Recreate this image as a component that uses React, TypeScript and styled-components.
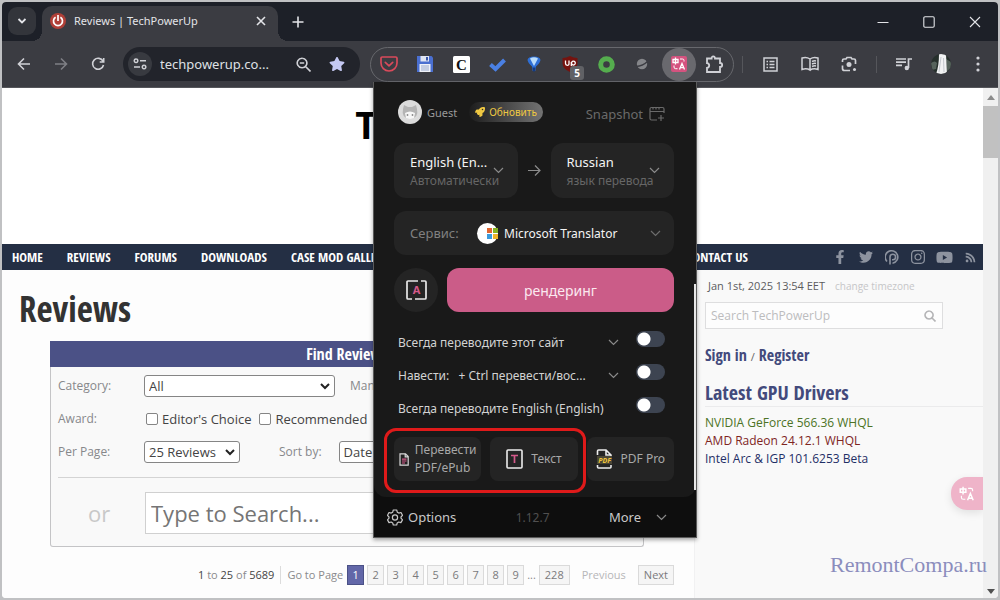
import React from "react";
import styled, { createGlobalStyle, css } from "styled-components";
import { FaFacebookF, FaTwitter, FaInstagram, FaYoutube, FaRss } from "react-icons/fa";
import { FaStar, FaRocket } from "react-icons/fa";

const ui = '"Noto Sans", "Open Sans", sans-serif';
const site = '"Open Sans", "Noto Sans", sans-serif';
const condensed = '"Open Sans Condensed", "Liberation Sans Narrow", "Open Sans", sans-serif';

const GlobalStyle = createGlobalStyle`
  *, *::before, *::after { box-sizing: border-box; }
  body { margin: 0; background: #c0c1c3; font-family: ${site}; }
  button, input, select { font: inherit; color: inherit; margin: 0; }
  button { border: 0; padding: 0; background: none; cursor: pointer; }
  a { color: inherit; text-decoration: none; }
  h1, h2, h3, ul { margin: 0; padding: 0; }
  ul { list-style: none; }
  svg { display: block; flex: none; }
`;

/* ---------- browser window ---------- */

const Desktop = styled.div`
  height: 100vh;
  padding: 2px;
`;

const Window = styled.div`
  position: relative;
  display: flex;
  flex-direction: column;
  height: 100%;
  overflow: hidden;
  border-radius: 4px;
  background: #fdfdfd;
`;

const TabBar = styled.div`
  display: flex;
  align-items: stretch;
  height: 39px;
  flex: none;
  padding-left: 6px;
  background: #1d2028;
  color: #e3e4e8;
  font-family: ${ui};
`;

const TabSearch = styled.button`
  display: grid;
  place-items: center;
  width: 28px;
  height: 28px;
  margin: 5px 6px 0 0;
  border-radius: 9px;
  background: #33353b;
`;

const Tab = styled.div`
  position: relative;
  display: flex;
  align-items: center;
  gap: 8px;
  width: 236px;
  margin-top: 4px;
  padding: 0 12px 6px 8px;
  border-radius: 10px 10px 0 0;
  background: #3b3c42;
  font-size: 11px;
  &::before, &::after {
    content: "";
    position: absolute;
    bottom: 0;
    width: 10px;
    height: 10px;
  }
  &::before {
    left: -10px;
    background: radial-gradient(circle at 0 0, transparent 10px, #3b3c42 10px);
  }
  &::after {
    right: -10px;
    background: radial-gradient(circle at 100% 0, transparent 10px, #3b3c42 10px);
  }
`;

const TabTitle = styled.span`
  flex: 1;
  white-space: nowrap;
`;

const NewTab = styled.button`
  display: grid;
  place-items: center;
  width: 40px;
`;

const WindowControls = styled.div`
  display: flex;
  margin-left: auto;
`;

const WindowControl = styled.button`
  display: grid;
  place-items: center;
  width: 46px;
`;

const Toolbar = styled.div`
  display: flex;
  align-items: center;
  height: 47px;
  flex: none;
  padding: 0 2px 0 3px;
  background: #3b3c42;
  border-bottom: 1px solid #55565b;
  color: #d0d1d6;
  font-family: ${ui};
`;

const ToolButton = styled.button<{ $wide?: boolean; $dim?: boolean }>`
  display: grid;
  place-items: center;
  width: ${(p) => (p.$wide ? 39 : 37)}px;
  height: 34px;
  opacity: ${(p) => (p.$dim ? 0.45 : 1)};
`;

const Omnibox = styled.div`
  display: flex;
  align-items: center;
  flex: 1;
  min-width: 0;
  height: 34px;
  margin: 0 10px 0 7px;
  padding: 0 14px 0 5px;
  border-radius: 17px;
  background: #22242b;
`;

const SiteInfo = styled.button`
  display: grid;
  place-items: center;
  width: 24px;
  height: 24px;
  margin-right: 8px;
  border-radius: 50%;
  background: #383a40;
`;

const Address = styled.input`
  flex: 1;
  min-width: 0;
  padding: 0;
  border: 0;
  background: none;
  color: #dfe0e4;
  font-size: 13px;
`;

const OmniButton = styled.button`
  display: grid;
  place-items: center;
  width: 33px;
  height: 24px;
  &:last-child { width: 18px; margin-left: 8px; }
`;

const Extensions = styled.div`
  display: grid;
  grid-template-columns: repeat(10, 1fr);
  width: 364px;
  height: 35px;
  border: 1px solid #67686d;
  border-radius: 18px;
`;

const Extension = styled.button<{ $active?: boolean }>`
  position: relative;
  display: grid;
  place-items: center;
  ${(p) =>
    p.$active &&
    css`
      justify-self: center;
      width: 34px;
      height: 33px;
      border-radius: 50%;
      background: #69696e;
    `}
`;

const Count = styled.span`
  position: absolute;
  right: 4px;
  bottom: 1px;
  width: 14px;
  height: 14px;
  border-radius: 3px;
  background: #606165;
  color: #fff;
  font: bold 10px/14px ${ui};
  text-align: center;
`;

const Divider = styled.span`
  width: 1px;
  height: 17px;
  margin: 0 8px;
  background: #55565b;
`;

const Profile = styled.span`
  width: 20px;
  height: 20px;
  border-radius: 50%;
  overflow: hidden;
`;

const Viewport = styled.div`
  display: flex;
  flex: 1;
  min-height: 0;
`;

const ScrollTrack = styled.div`
  display: flex;
  flex-direction: column;
  align-items: center;
  width: 15px;
  padding: 7px 0 4px;
  background: #f0f0f0;
`;

const ScrollThumb = styled.div`
  width: 15px;
  height: 52px;
  margin: 6px 0 auto;
  background: #c1c1c1;
`;

/* ---------- web page ---------- */

const Page = styled.div`
  position: relative;
  display: flex;
  flex-direction: column;
  flex: 1;
  min-width: 0;
  overflow: hidden;
  color: #333;
`;

const Masthead = styled.header`
  flex: none;
  height: 156px;
  padding: 12px 0 0 36%;
  background: #fff;
  color: #000;
  font: bold 38px/48px "Open Sans", sans-serif;
`;

const SiteNav = styled.nav`
  display: flex;
  align-items: center;
  flex: none;
  height: 26px;
  padding: 0 0 0 10px;
  background: #242f44;
  color: #fff;
  font: bold 13px/24px ${condensed};
  white-space: nowrap;
`;

const NavLinks = styled.ul`
  display: flex;
  gap: 24px;
  flex: 1;
`;

const Social = styled.ul`
  display: flex;
  margin-left: 79px;
  color: #8d939f;
  a {
    display: grid;
    place-items: center;
    width: 26px;
    height: 26px;
  }
`;

const Columns = styled.div`
  display: flex;
  flex: 1;
`;

const Main = styled.main`
  flex: 1;
  min-width: 0;
  padding: 12px 50px 0 17px;
  background: #fdfdfd;
`;

const PageTitle = styled.h1`
  color: #333;
  font: bold 35px/54px ${condensed};
`;

const Finder = styled.form`
  margin: 5px 0 0 31px;
  border: 1px solid #c4c4c6;
  border-top: 0;
  border-radius: 0 0 3px 3px;
  background: #f9f9f9;
`;

const FinderTitle = styled.h2`
  margin: 0 -1px;
  background: #4b5186;
  color: #fff;
  font: bold 16px/26px ${condensed};
  text-align: center;
`;

const FinderBody = styled.div`
  padding: 6px 7px 12px;
`;

const Row = styled.div`
  display: flex;
  align-items: center;
  height: 33px;
  padding-bottom: 8px;
  font-size: 13px;
`;

const Label = styled.label<{ $inline?: boolean }>`
  width: ${(p) => (p.$inline ? "auto" : "86px")};
  flex: none;
  color: #87888b;
  font-size: 12px;
`;

const SelectWrap = styled.span<{ $w: number }>`
  position: relative;
  width: ${(p) => p.$w}px;
  flex: none;
  svg { position: absolute; right: 5px; top: 7px; pointer-events: none; }
  select {
    appearance: none;
    display: block;
    width: 100%;
    height: 22px;
    padding: 0 4px;
    border: 1px solid #858585;
    border-radius: 3px;
    background: #fff;
    color: #444;
    font-size: 13px;
    line-height: 20px;
  }
`;

const SortGroup = styled.span`
  display: flex;
  align-items: center;
  gap: 17px;
  margin-left: 39px;
`;

const MakerGroup = styled.span`
  display: flex;
  margin-left: 15px;
`;

const Tick = styled.label`
  display: flex;
  align-items: center;
  gap: 4px;
  margin: 0 6px 0 2px;
  color: #444;
  font-size: 13px;
  input {
    appearance: none;
    width: 12px;
    height: 12px;
    border: 1px solid #858585;
    border-radius: 2px;
    background: #fff;
  }
`;

const SearchRow = styled.div`
  display: flex;
  align-items: center;
  margin-top: 5px;
  padding-top: 14px;
  border-top: 1px solid #d4d4d4;
  label {
    width: 87px;
    padding-left: 30px;
    color: #c8c8c8;
    font-size: 22px;
  }
  input {
    flex: 1;
    min-width: 0;
    height: 42px;
    padding: 0 5px;
    border: 1px solid #d0d0d0;
    background: #fff;
    font-size: 22px;
    &::placeholder { color: #757575; opacity: 1; }
  }
`;

const Pager = styled.nav`
  display: flex;
  align-items: center;
  justify-content: flex-end;
  gap: 3px;
  margin: 18px -30px 0 0;
  color: #8a8a8c;
  font-size: 11px;
  line-height: 18px;
  white-space: nowrap;
`;

const Summary = styled.span`
  margin-right: 2px;
  padding-right: 6px;
  border-right: 1px solid #dcdcdc;
  b { color: #444; font-weight: 500; }
`;

const PagerText = styled.span<{ $faint?: boolean }>`
  margin: 0 ${(p) => (p.$faint ? "9px" : "1px")};
  color: ${(p) => (p.$faint ? "#b6b6b8" : "inherit")};
`;

const PageLink = styled.a<{ $current?: boolean }>`
  min-width: 17px;
  padding: 0 5px;
  border: 1px solid ${(p) => (p.$current ? "#4b5186" : "#dadada")};
  background: ${(p) => (p.$current ? "#6267a8" : "#f5f5f5")};
  color: ${(p) => (p.$current ? "#fff" : "#7a7a7c")};
  text-align: center;
`;

const NumberLinks = styled.span`
  display: flex;
  gap: 3px;
  a { padding: 0 4px; }
`;

const Sidebar = styled.aside`
  width: 289px;
  flex: none;
  padding: 8px 0 0 10px;
  border-left: 1px solid #f1f1f2;
  background: #f9f9f9;
`;

const DateLine = styled.p`
  display: flex;
  align-items: center;
  gap: 10px;
  margin: 0 0 8px 3px;
  color: #5c5c5e;
  font-size: 11px;
  line-height: 16px;
  a { color: #c6c6c8; font-size: 10px; }
`;

const SiteSearch = styled.div`
  display: flex;
  align-items: center;
  width: 238px;
  height: 27px;
  padding: 0 6px 0 5px;
  border: 1px solid #dededf;
  background: #fdfdfd;
  input {
    flex: 1;
    min-width: 0;
    padding: 0;
    border: 0;
    background: none;
    font-size: 12px;
    &::placeholder { color: #bcbcbe; opacity: 1; }
  }
`;

const SignIn = styled.p`
  margin: 14px 0 13px;
  color: #434a7c;
  font: bold 16px/24px ${condensed};
  span { color: #666; font: 11px ${site}; }
`;

const SideTitle = styled.h2`
  border-bottom: 1px solid #ebebec;
  color: #434a7c;
  font: bold 20px/26px ${condensed};
`;

const Drivers = styled.ul`
  margin-top: 7px;
  font-size: 12px;
  font-weight: 500;
  line-height: 18px;
`;

const Driver = styled.li<{ $color: string }>`
  color: ${(p) => p.$color};
`;

const FloatButton = styled.button`
  position: absolute;
  right: 0;
  bottom: 88px;
  display: grid;
  place-items: center;
  width: 32px;
  height: 33px;
  border-radius: 16px 0 0 16px;
  background: #efb4c9;
  box-shadow: 0 3px 8px rgba(0, 0, 0, 0.1);
`;

const Watermark = styled.div`
  position: absolute;
  right: 11px;
  bottom: 19px;
  color: #8b8dbd;
  font: 22px/28px "Liberation Serif", serif;
`;

/* ---------- translator popup ---------- */

const Popup = styled.section`
  position: absolute;
  top: 80px;
  right: 301px;
  width: 324px;
  border: 1px solid #5a5a5a;
  border-top: 0;
  background: #0e0e0e;
  box-shadow: 0 2px 4px rgba(0, 0, 0, 0.35);
  color: #c9c9c9;
  font-family: ${ui};
  font-size: 13px;
`;

const PopupBody = styled.div`
  position: relative;
  padding: 18px 22px 16px 20px;
  border-radius: 0 0 12px 12px;
  background: #191919;
`;

const PopupScroll = styled.div`
  position: absolute;
  right: 0;
  top: 202px;
  width: 2px;
  height: 206px;
  background: #e6e6e6;
`;

const Account = styled.div`
  display: flex;
  align-items: center;
  height: 24px;
  padding: 0 9px 0 4px;
  font-size: 11px;
`;

const Guest = styled.span`
  margin: 0 12px 0 5px;
  color: #999;
`;

const Upgrade = styled.button`
  display: flex;
  align-items: center;
  gap: 4px;
  height: 20px;
  padding: 0 6px;
  border-radius: 10px;
  background: linear-gradient(90deg, #1d1d1d, #737373);
  color: #efc842;
  font-size: 10px;
`;

const Snapshot = styled.button`
  display: flex;
  align-items: center;
  gap: 6px;
  margin-left: auto;
  padding-top: 3px;
  color: #6a6a6a;
  font-size: 13px;
`;

const Languages = styled.div`
  display: grid;
  grid-template-columns: 1fr 33px 1fr;
  align-items: center;
  justify-items: center;
  margin-top: 19px;
  color: #8c8c8c;
`;

const Language = styled.button`
  display: flex;
  align-items: center;
  justify-content: space-between;
  width: 100%;
  height: 55px;
  padding: 0 14px 0 16px;
  border-radius: 12px;
  background: #242424;
  text-align: left;
  white-space: nowrap;
`;

const LanguageText = styled.span`
  display: block;
  width: 0;
  strong {
    display: block;
    color: #f4f4f4;
    font-size: 13px;
    font-weight: 400;
    line-height: 20px;
  }
  small {
    display: block;
    color: #666;
    font-size: 12px;
    line-height: 18px;
  }
`;

const Service = styled.button`
  display: flex;
  align-items: center;
  width: 100%;
  height: 44px;
  margin-top: 13px;
  padding: 0 13px 0 16px;
  border-radius: 12px;
  background: #242424;
  color: #f4f4f4;
  font-size: 12px;
  svg:last-child { margin-left: auto; }
`;

const ServiceLabel = styled.span`
  width: 67px;
  color: #808080;
  font-size: 13px;
  text-align: left;
`;

const ServiceLogo = styled.span`
  display: grid;
  place-items: center;
  width: 21px;
  height: 21px;
  margin-right: 6px;
  border-radius: 50%;
  background: #fff;
`;

const Actions = styled.div`
  display: flex;
  gap: 9px;
  margin-top: 13px;
`;

const RoundButton = styled.button`
  display: grid;
  place-items: center;
  width: 44px;
  height: 44px;
  border-radius: 50%;
  background: #242424;
`;

const Render = styled.button`
  flex: 1;
  border-radius: 12px;
  background: #cb5c88;
  color: #fbe9f0;
  font-size: 14px;
`;

const Options = styled.div`
  display: grid;
  row-gap: 16px;
  margin-top: 22px;
  padding: 0 9px 0 4px;
`;

const Option = styled.div`
  display: flex;
  align-items: center;
  height: 17px;
  color: #d2d2d2;
  font-size: 12px;
  white-space: nowrap;
  > label { white-space: pre; }
  > svg { margin-left: auto; }
`;

const Switch = styled.input`
  appearance: none;
  width: 29px;
  height: 16px;
  margin: 0 0 7px auto;
  border-radius: 8px;
  background: radial-gradient(circle at 8px 8px, #fff 6px, transparent 7px), #3d4451;
  svg + & { margin-left: 17px; }
`;

const Tools = styled.div`
  position: relative;
  display: grid;
  grid-template-columns: repeat(3, 1fr);
  gap: 9px;
  margin-top: 20px;
`;

const Tool = styled.button`
  display: flex;
  align-items: center;
  justify-content: center;
  gap: 8px;
  height: 44px;
  border-radius: 8px;
  background: #242424;
  color: #a8a8a8;
  font-size: 12px;
  line-height: 18px;
  text-align: left;
  &:first-child { gap: 6px; }
`;

const Highlight = styled.div`
  position: absolute;
  left: -10px;
  top: -9px;
  width: 202px;
  height: 65px;
  border: 3px solid #df1a1a;
  border-radius: 12px;
  pointer-events: none;
`;

const PopupFooter = styled.footer`
  display: flex;
  align-items: center;
  justify-content: space-between;
  height: 40px;
  padding: 0 29px 0 13px;
  button { display: flex; align-items: center; gap: 5px; }
  button:last-child { gap: 15px; }
`;

const Version = styled.span`
  color: #505050;
  font-size: 12px;
`;

/* ---------- drawings ---------- */

type Stroke = { d: string; size?: number; w?: number; color?: string; box?: number };

const Line = ({ d, size = 16, w = 1.6, color = "currentColor", box = 16 }: Stroke) => (
  <svg width={size} height={size} viewBox={`0 0 ${box} ${box}`} fill="none" stroke={color} strokeWidth={w}>
    <path d={d} />
  </svg>
);

const Chevron = ({ color = "#8a8a8a", w = 1.2 }: { color?: string; w?: number }) => (
  <svg width="11" height="7" viewBox="0 0 11 7" fill="none" stroke={color} strokeWidth={w}>
    <path d="M1 1l4.500 4.500L10 1" />
  </svg>
);

const SelectArrow = () => (
  <svg width="10" height="8" viewBox="0 0 10 8" fill="none" stroke="#222" strokeWidth="2">
    <path d="M1 2l4 4 4-4" />
  </svg>
);

const Power = () => (
  <svg width="16" height="16" viewBox="0 0 16 16">
    <circle cx="8" cy="8" r="8" fill="#b04038" />
    <path d="M5.600 4.300a4.500 4.500 0 1 0 4.800 0M8 2v6" fill="none" stroke="#fff" strokeWidth="1.700" />
  </svg>
);

const TranslateMark = ({ size, bg }: { size: number; bg?: string }) => (
  <svg width={size} height={size} viewBox="0 0 16 16">
    {bg && <rect width="16" height="16" rx="2" fill={bg} />}
    <g fill="none" stroke="#fff" strokeWidth="1.300">
      <path d="M2 3.500h5v3H2zM4.500 1.500v7M8.500 13.500l2.500-6 2.500 6M9.300 11.700h3.400" />
      <path d="M9 3h2.500q1.500 0 1.500 1.500v1M3 9.500v1.500q0 1.700 1.700 1.700H6.500" strokeWidth="1" />
    </g>
  </svg>
);

const Pocket = () => (
  <svg width="18" height="18" viewBox="0 0 18 18" fill="none" stroke="#d94a5b" strokeWidth="1.700" strokeLinecap="round" strokeLinejoin="round">
    <path d="M2.200 2h13.600q1.200 0 1.200 1.200V8a8 8 0 0 1-16 0V3.200Q1 2 2.200 2zM5.300 7.300L9 10.800l3.700-3.500" />
  </svg>
);

const Floppy = () => (
  <svg width="16" height="16" viewBox="0 0 16 16">
    <path d="M0 0h14.500L16 1.500V16H0z" fill="#4a6fd0" />
    <path d="M3.500 0h8.500v5.500H3.500z" fill="#dfe5f3" />
    <path d="M9 1h2v3.500H9z" fill="#3a57a8" />
    <path d="M2.500 8h11v8h-11z" fill="#eef1f8" />
    <path d="M4 10h8M4 12h8M4 14h8" stroke="#9aa9cc" />
  </svg>
);

const LetterC = () => (
  <svg width="17" height="17" viewBox="0 0 17 17">
    <rect width="17" height="17" rx="1.500" fill="#fff" />
    <text x="8.500" y="13.500" textAnchor="middle" fontFamily="Liberation Serif, serif" fontWeight="700" fontSize="15" fill="#111">C</text>
  </svg>
);

const Shield = () => (
  <svg width="16" height="16" viewBox="0 0 16 16">
    <path d="M8 0q3.500 2 7.500 2v5q0 6-7.500 9Q.5 13 .5 7V2Q4.500 2 8 0z" fill="#75130f" />
    <path d="M3.500 4.500v3q0 1.800 1.800 1.800T7 7.500v-3M9.300 10V6M9.500 7a1.900 1.900 0 1 1 0 .1" fill="none" stroke="#fff" strokeWidth="1.300" />
  </svg>
);

const Balloon = () => (
  <svg width="14" height="16" viewBox="0 0 14 16">
    <path d="M.5 4Q1 .5 7 .5T13.500 4Q13 7 9 10.500L8.300 15H5.700L5 10.500Q1 7 .5 4z" fill="#2e6fd6" />
    <path d="M3 2.500q4-2.500 8 0L7 10z" fill="#b9dcfb" />
    <path d="M5.500 11.500h3l-.7 4H6.200z" fill="#123a80" />
  </svg>
);

const Puzzle = () => (
  <Line
    size={19}
    box={19}
    w={1.8}
    d="M2 3.500h4.600Q6.500 1.500 8.300 1.500T10 3.500h5V8q2.200 0 2.200 2T15 12v5H2v-4.200q2.200-.2 2.200-2.300T2 8.200z"
  />
);

const Waterfall = () => (
  <svg width="20" height="20" viewBox="0 0 20 20">
    <rect width="20" height="20" fill="#26302c" />
    <path d="M0 9q4-3 6 0l-1 6-4 1zM15 5l5 3v6l-4 3z" fill="#56635c" />
    <path d="M8 0h7l1 20H5q3-8 3-20z" fill="#f2f3f4" />
    <path d="M10 3L8 18M12.500 4l.5 14" stroke="#b9bec4" strokeWidth=".8" />
  </svg>
);

const Patreon = () => (
  <svg width="15" height="15" viewBox="0 0 15 15" fill="none" stroke="currentColor" strokeWidth="1.600">
    <path d="M5 14.500V7a2.800 2.800 0 1 1 2.800 2.800H7M2 11.500A6.300 6.300 0 1 1 7.500 13.300" />
  </svg>
);

const GuestFace = () => (
  <svg width="24" height="24" viewBox="0 0 24 24">
    <circle cx="12" cy="12" r="12" fill="#dcdcdc" />
    <path d="M5 9l1-4 4 2h4l4-2 1 4q2 9-7 10Q3 18 5 9z" fill="#b4b4b4" />
    <path d="M7 13q5-3 10 0l-1 5q-4 2-8 0z" fill="#f6f6f6" />
    <circle cx="9.500" cy="15" r=".9" fill="#888" />
    <circle cx="14.500" cy="15" r=".9" fill="#888" />
  </svg>
);

const Gear = () => (
  <svg width="16" height="17" viewBox="0 0 16 17" fill="none" stroke="#c9c9c9" strokeWidth="1.200" strokeLinejoin="round">
    <path d="M6.300 1h3.400l.6 2.200 1.500.9 2.200-.6 1.500 2.800L14 8v1.200l1.500 1.600-1.600 2.800-2.200-.6-1.500.9L9.700 16H6.300l-.6-2.100-1.500-.9-2.200.6-1.500-2.800L2 9.200V8L.5 6.300 2 3.500l2.200.6 1.500-.9z" />
    <circle cx="8" cy="8.500" r="2.600" />
  </svg>
);

const sites = ["HOME", "REVIEWS", "FORUMS", "DOWNLOADS", "CASE MOD GALLERY"];
const pages = [1, 2, 3, 4, 5, 6, 7, 8, 9];

/* ---------- sections ---------- */

const Chrome = () => (
  <>
    <TabBar>
      <TabSearch aria-label="Search tabs">
        <Line size={10} box={10} w={1.8} d="M1.500 3l3.500 3.500L8.500 3" />
      </TabSearch>
      <Tab>
        <Power />
        <TabTitle>Reviews | TechPowerUp</TabTitle>
        <button aria-label="Close tab"><Line size={10} box={10} d="M1 1l8 8M9 1L1 9" /></button>
      </Tab>
      <NewTab aria-label="New tab"><Line size={12} box={12} d="M6 .5v11M.5 6h11" /></NewTab>
      <WindowControls>
        <WindowControl aria-label="Minimize"><Line size={12} box={12} w={1.1} d="M.5 6.500h11" /></WindowControl>
        <WindowControl aria-label="Maximize"><Line size={12} box={12} w={1.1} d="M2 .8h8q1.200 0 1.200 1.200v8q0 1.200-1.200 1.200H2Q.8 11.200.8 10V2Q.8.8 2 .8z" /></WindowControl>
        <WindowControl aria-label="Close"><Line size={12} box={12} w={1.1} d="M1 1l10 10M11 1L1 11" /></WindowControl>
      </WindowControls>
    </TabBar>
    <Toolbar>
      <ToolButton aria-label="Back"><Line size={14} box={14} d="M13 7H2M7 1.500L1.500 7 7 12.500" /></ToolButton>
      <ToolButton aria-label="Forward" $dim><Line size={14} box={14} d="M1 7h11M7 1.500L12.500 7 7 12.500" /></ToolButton>
      <ToolButton aria-label="Reload"><Line size={14} box={14} d="M12 4.200A5.500 5.500 0 1 0 12.500 8M12.700 1v4H8.700" /></ToolButton>
      <Omnibox>
        <SiteInfo aria-label="Site information">
          <Line size={14} box={14} w={1.5} d="M3 2a1.800 1.800 0 1 0 .1 0M7 3.800h6M11 8.200a1.800 1.800 0 1 0 .1 0M1 10h6" />
        </SiteInfo>
        <Address aria-label="Address" defaultValue="techpowerup.co..." />
        <OmniButton aria-label="Zoom"><Line size={15} box={15} d="M6 1.200a4.800 4.800 0 1 0 .1 0M9.500 9.500l5 5M3.800 6h4.400" /></OmniButton>
        <OmniButton aria-label="Bookmark"><FaStar size={16} color="#c4c8f2" /></OmniButton>
      </Omnibox>
      <Extensions>
        <Extension aria-label="Pocket"><Pocket /></Extension>
        <Extension aria-label="Save"><Floppy /></Extension>
        <Extension aria-label="Cache"><LetterC /></Extension>
        <Extension aria-label="Tasks"><Line size={17} box={17} w={4} color="#4a80e4" d="M1.500 8.500l5 4.500L15.500 4" /></Extension>
        <Extension aria-label="Balloon"><Balloon /></Extension>
        <Extension aria-label="Blocker"><Shield /><Count>5</Count></Extension>
        <Extension aria-label="Ring">
          <svg width="17" height="17"><circle cx="8.500" cy="8.500" r="5.800" fill="none" stroke="#55ad4e" strokeWidth="5" /></svg>
        </Extension>
        <Extension aria-label="Planet">
          <svg width="12" height="12"><circle cx="6" cy="6" r="5.200" fill="#85868a" /><path d="M0 8.500Q7 8 12 3" stroke="#3b3c42" strokeWidth="1.300" fill="none" /></svg>
        </Extension>
        <Extension aria-label="Immersive Translate" $active><TranslateMark size={16} bg="#d4537f" /></Extension>
        <Extension aria-label="Extensions"><Puzzle /></Extension>
      </Extensions>
      <Divider />
      <ToolButton $wide aria-label="Reading list">
        <Line size={15} box={15} w={1.5} d="M1 1h13v13H1zM3.500 4.500H5M6.500 4.500h5M3.500 7.500H5M6.500 7.500h5M3.500 10.500H5M6.500 10.500h5" />
      </ToolButton>
      <ToolButton $wide aria-label="Reading mode">
        <Line size={18} box={18} w={1.5} d="M9 4v11Q5.500 13 1 14.500V3Q5.500 1.500 9 4q3.500-2.500 8-1v11.500Q12.500 13 9 15M11 6.500q2-1 4-.6M11 9q2-1 4-.6M11 11.500q2-1 4-.6" />
      </ToolButton>
      <ToolButton $wide aria-label="Lens">
        <svg width="16" height="16" viewBox="0 0 16 16" fill="none" stroke="currentColor" strokeWidth="1.700">
          <path d="M1.500 6V4.500q0-1.500 1.500-1.500h2L6 1.500h4L11 3h2q1.500 0 1.500 1.500V8M1.500 9.500v3q0 2 2 2H9" />
          <circle cx="8" cy="8.500" r="2.500" fill="currentColor" stroke="none" />
          <circle cx="13.500" cy="13.500" r="1.500" fill="currentColor" stroke="none" />
        </svg>
      </ToolButton>
      <Divider />
      <ToolButton aria-label="Media">
        <svg width="16" height="14" viewBox="0 0 16 14" fill="none" stroke="currentColor" strokeWidth="1.700">
          <path d="M0 2h10M0 5.200h10M0 8.400h6M12.500 11V2H16" />
          <circle cx="10.800" cy="11" r="2.200" fill="currentColor" stroke="none" />
        </svg>
      </ToolButton>
      <ToolButton aria-label="Profile"><Profile><Waterfall /></Profile></ToolButton>
      <ToolButton aria-label="Menu">
        <svg width="4" height="16" fill="currentColor"><circle cx="2" cy="2" r="1.600" /><circle cx="2" cy="8" r="1.600" /><circle cx="2" cy="14" r="1.600" /></svg>
      </ToolButton>
    </Toolbar>
  </>
);

const Site = () => (
  <Page>
    <Masthead>T</Masthead>
    <SiteNav>
      <NavLinks>{sites.map((s) => <li key={s}><a href="#">{s}</a></li>)}</NavLinks>
      <a href="#">CONTACT US</a>
      <Social>
        <li><a href="#" aria-label="Facebook"><FaFacebookF size={14} /></a></li>
        <li><a href="#" aria-label="Twitter"><FaTwitter size={14} /></a></li>
        <li><a href="#" aria-label="Patreon"><Patreon /></a></li>
        <li><a href="#" aria-label="Instagram"><FaInstagram size={16} /></a></li>
        <li><a href="#" aria-label="YouTube"><FaYoutube size={17} /></a></li>
        <li><a href="#" aria-label="RSS"><FaRss size={11} /></a></li>
      </Social>
    </SiteNav>
    <Columns>
      <Main>
        <PageTitle>Reviews</PageTitle>
        <Finder>
          <FinderTitle>Find Reviews</FinderTitle>
          <FinderBody>
            <Row>
              <Label htmlFor="category">Category:</Label>
              <SelectWrap $w={191}><select id="category"><option>All</option></select><SelectArrow /></SelectWrap>
              <MakerGroup><Label as="span">Manufacturer:</Label></MakerGroup>
            </Row>
            <Row>
              <Label as="span">Award:</Label>
              <Tick><input type="checkbox" />Editor's Choice</Tick>
              <Tick><input type="checkbox" />Recommended</Tick>
            </Row>
            <Row>
              <Label htmlFor="perpage">Per Page:</Label>
              <SelectWrap $w={96}><select id="perpage"><option>25 Reviews</option></select><SelectArrow /></SelectWrap>
              <SortGroup>
                <Label htmlFor="sort" $inline>Sort by:</Label>
                <SelectWrap $w={96}><select id="sort"><option>Date</option></select><SelectArrow /></SelectWrap>
              </SortGroup>
            </Row>
            <SearchRow>
              <label htmlFor="find">or</label>
              <input id="find" placeholder="Type to Search..." />
            </SearchRow>
          </FinderBody>
        </Finder>
        <Pager>
          <Summary><b>1</b> to <b>25</b> of <b>5689</b></Summary>
          <PagerText>Go to Page</PagerText>
          <NumberLinks>{pages.map((n) => <PageLink key={n} href="#" $current={n === 1}>{n}</PageLink>)}</NumberLinks>
          <span>...</span>
          <PageLink href="#">228</PageLink>
          <PagerText $faint>Previous</PagerText>
          <PageLink href="#">Next</PageLink>
        </Pager>
      </Main>
      <Sidebar>
        <DateLine>Jan 1st, 2025 13:54 EET <a href="#">change timezone</a></DateLine>
        <SiteSearch>
          <input aria-label="Search TechPowerUp" placeholder="Search TechPowerUp" />
          <Line size={12} box={12} color="#b4b4b6" d="M5 1a4 4 0 1 0 .1 0M8 8l3.500 3.500" />
        </SiteSearch>
        <SignIn><a href="#">Sign in</a> <span>/</span> <a href="#">Register</a></SignIn>
        <SideTitle>Latest GPU Drivers</SideTitle>
        <Drivers>
          <Driver $color="#4c7325"><a href="#">NVIDIA GeForce 566.36 WHQL</a></Driver>
          <Driver $color="#7e251f"><a href="#">AMD Radeon 24.12.1 WHQL</a></Driver>
          <Driver $color="#1f2f66"><a href="#">Intel Arc &amp; IGP 101.6253 Beta</a></Driver>
        </Drivers>
      </Sidebar>
    </Columns>
    <FloatButton aria-label="Translate page"><TranslateMark size={18} /></FloatButton>
  </Page>
);

const Translator = () => (
  <Popup>
    <PopupBody>
      <Account>
        <GuestFace />
        <Guest>Guest</Guest>
        <Upgrade><FaRocket size={10} />Обновить</Upgrade>
        <Snapshot>
          Snapshot
          <Line size={16} w={1.2} d="M15 7V3q0-1.500-1.500-1.500h-11Q1 1.500 1 3v9.500Q1 14 2.500 14H8M1 5.500h14M4 1.500v2M7 1.500v2M10 1.500v2M12 9v6M9 12h6" />
        </Snapshot>
      </Account>
      <Languages>
        <Language><LanguageText><strong>English (En...</strong><small>Автоматически</small></LanguageText><Chevron /></Language>
        <Line size={13} box={13} w={1.2} d="M0 6.500h12M7 1.500l5 5-5 5" />
        <Language><LanguageText><strong>Russian</strong><small>язык перевода</small></LanguageText><Chevron /></Language>
      </Languages>
      <Service>
        <ServiceLabel>Сервис:</ServiceLabel>
        <ServiceLogo>
          <svg width="11" height="11"><path d="M0 0h5v5H0z" fill="#e0662f" /><path d="M6 0h5v5H6z" fill="#86b324" /><path d="M0 6h5v5H0z" fill="#3b9bdc" /><path d="M6 6h5v5H6z" fill="#eeb32b" /></svg>
        </ServiceLogo>
        Microsoft Translator
        <Chevron color="#6c6c6c" />
      </Service>
      <Actions>
        <RoundButton aria-label="Translate area">
          <svg width="21" height="20" viewBox="0 0 21 20" fill="none" stroke="#e8e8e8" strokeWidth="1.700">
            <path d="M12 1H2q-1 0-1 1v16q0 1 1 1h4M15 1h4q1 0 1 1v16q0 1-1 1H9" />
            <text x="10.500" y="14" textAnchor="middle" fontFamily="Noto Sans, sans-serif" fontWeight="700" fontSize="11" fill="#d5598a" stroke="none">A</text>
          </svg>
        </RoundButton>
        <Render>рендеринг</Render>
      </Actions>
      <Options>
        <Option>
          <label htmlFor="always-site">Всегда переводите этот сайт</label>
          <Chevron /><Switch id="always-site" type="checkbox" />
        </Option>
        <Option>
          <label htmlFor="hover">Навести:   + Ctrl перевести/вос...</label>
          <Chevron /><Switch id="hover" type="checkbox" />
        </Option>
        <Option>
          <label htmlFor="always-lang">Всегда переводите English (English)</label>
          <Switch id="always-lang" type="checkbox" />
        </Option>
      </Options>
      <Tools>
        <Tool>
          <svg width="10" height="13" viewBox="0 0 10 13" fill="none" stroke="#d8d8d8" strokeWidth="1.200">
            <path d="M1 .8h5.500L9.200 3.500v8.700H1zM6.200.8v3h3" /><path d="M3 6.200h4.500M3 8h4.500M3 10h3" stroke="#d5598a" />
          </svg>
          <span>Перевести<br />PDF/ePub</span>
        </Tool>
        <Tool>
          <svg width="17" height="20" viewBox="0 0 17 20">
            <rect x="1" y="1" width="15" height="18" rx="1" fill="none" stroke="#ececec" strokeWidth="1.600" />
            <path d="M5 6.500h7M8.500 6v8" stroke="#d5598a" strokeWidth="1.700" />
          </svg>
          Текст
        </Tool>
        <Tool>
          <svg width="17" height="20" viewBox="0 0 17 20" fill="none" stroke="#ececec" strokeWidth="1.600">
            <path d="M1.500 6V2q0-1 1-1H10l5 5v1M10 1v5h5M1.500 16v2q0 1 1 1h11.500q1 0 1-1v-2" />
            <path d="M1 7h15v8H1z" fill="#4a4636" stroke="none" />
            <text x="8.500" y="14" textAnchor="middle" fontFamily="Noto Sans, sans-serif" fontWeight="700" fontStyle="italic" fontSize="7" fill="#f0c53a" stroke="none">PDF</text>
          </svg>
          PDF Pro
        </Tool>
        <Highlight />
      </Tools>
      <PopupScroll />
    </PopupBody>
    <PopupFooter>
      <button><Gear />Options</button>
      <Version>1.12.7</Version>
      <button>More<Chevron /></button>
    </PopupFooter>
  </Popup>
);

export default function App() {
  return (
    <Desktop>
      <GlobalStyle />
      <Window>
        <Chrome />
        <Viewport>
          <Site />
          <ScrollTrack>
            <svg width="8" height="5"><path d="M0 5l4-5 4 5z" fill="#8b8b8b" /></svg>
            <ScrollThumb />
            <svg width="8" height="5"><path d="M0 0l4 5 4-5z" fill="#505050" /></svg>
          </ScrollTrack>
        </Viewport>
        <Translator />
        <Watermark>RemontCompa.ru</Watermark>
      </Window>
    </Desktop>
  );
}
